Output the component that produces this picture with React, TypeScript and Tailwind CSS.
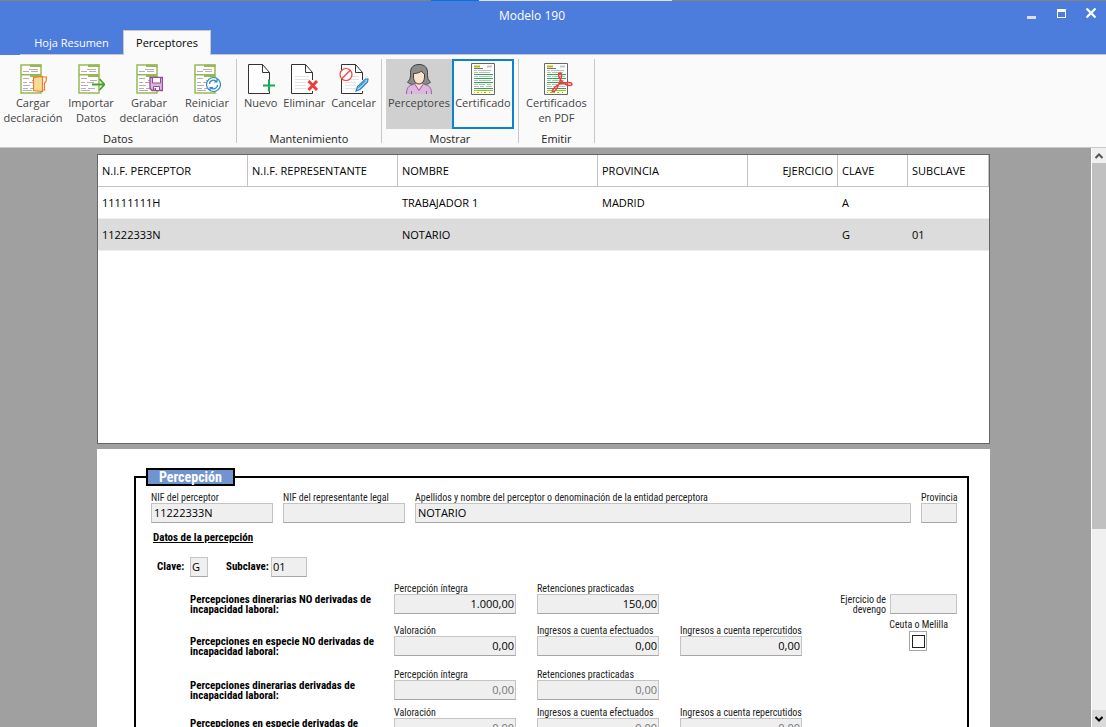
import type { ReactNode } from "react";
import { clsx } from "clsx";

const GREEN = "#97b954";

function FormSheet({ children }: { children: ReactNode }) {
  return (
    <svg width="28" height="32" viewBox="0 0 28 32" fill="none" aria-hidden="true">
      <path d="M2 2h20v28H2z" fill="#fff" stroke={GREEN} strokeWidth="1.5" />
      <path d="M11 1.5h11.5V4H11zM2 11h20v1.5H2zM11 11h11v3H11z" fill={GREEN} />
      <path
        d="M10 6.500h9M4 8.500h6M12 8.500h7M4 15.500h6M13 17.500h7M4 19.500h4M10 19.500h7M4 22.500h7M4 25.500h5M11 25.500h7M4 27.500h9"
        stroke="#b5aeb5"
      />
      {children}
    </svg>
  );
}

function LoadIcon() {
  return (
    <FormSheet>
      <path d="M23 14h4.500l-.5 4.500-1.500 1.500v7H23z" fill="#fff" stroke="#ee7a2c" strokeWidth="1.200" />
      <path d="M14.500 14.500l9-1v15l-9-1z" fill="#f8dc93" stroke="#ee7a2c" strokeWidth="1.200" />
    </FormSheet>
  );
}

function ImportIcon() {
  return (
    <FormSheet>
      <path d="M15 21.500h12M22.500 16l5 5.500-5 5.500" stroke="#45a22b" strokeWidth="1.800" />
    </FormSheet>
  );
}

function SaveIcon() {
  return (
    <FormSheet>
      <path d="M15 14.500h12.500v13H17l-2-2z" fill="#dcb6df" stroke="#934a9b" strokeWidth="1.300" />
      <path d="M17.500 14.500h8v5.500h-8z" fill="#fff" stroke="#934a9b" />
      <path d="M18.500 23.500h6v4h-6z" fill="#fff" stroke="#934a9b" />
      <path d="M19.500 25h1.500v2h-1.500z" fill="#934a9b" />
    </FormSheet>
  );
}

function ResetIcon() {
  return (
    <FormSheet>
      <circle cx="20.500" cy="21.500" r="7" fill="#fff" stroke="#2c88c7" strokeWidth="1.200" />
      <path
        d="M16.500 21a4 4 0 0 1 7-2.500M24.500 22a4 4 0 0 1-7 2.500M24 16v3h-3M17 27.500v-3h3"
        stroke="#2c88c7"
        strokeWidth="1.200"
      />
    </FormSheet>
  );
}

function BlankSheet({ children, lined = false }: { children: ReactNode; lined?: boolean }) {
  return (
    <svg width="30" height="32" viewBox="0 0 30 32" fill="none" aria-hidden="true">
      <path d="M3 1.500h13l7 8v21H3z" fill="#fff" />
      {lined && (
        <path d="M6 13.500h14M6 16.500h14M6 19.500h11M6 22.500h11M6 25.500h11" stroke="#e3e3e3" />
      )}
      <path d="M23.500 17V9.500l-7-8H2.500v29h21V28" stroke="#333" />
      <path d="M16.500 1.500v8h7" stroke="#333" />
      {children}
    </svg>
  );
}

function NewIcon() {
  return (
    <BlankSheet>
      <path d="M17 22.500h12M23 16.500v12" stroke="#17aa55" strokeWidth="2" />
    </BlankSheet>
  );
}

function DeleteIcon() {
  return (
    <BlankSheet lined>
      <path d="M19.500 18l8.500 9M28 18l-8.500 9" stroke="#ee3d3d" strokeWidth="3" />
    </BlankSheet>
  );
}

function CancelIcon() {
  return (
    <BlankSheet lined>
      <circle cx="7" cy="11.500" r="6" fill="#fff" stroke="#f04444" strokeWidth="1.200" />
      <path d="M3 15.500l8-8" stroke="#f04444" strokeWidth="1.200" />
      <path
        d="M17 28l1.500-4.500 8-7.500 2.500 0-.5 3-7.500 7.500z"
        fill="#a9d7ef"
        stroke="#2583bf"
        strokeWidth="1.200"
      />
      <path d="M19.500 24.500l7-6.500" stroke="#2583bf" />
    </BlankSheet>
  );
}

function PersonIcon() {
  return (
    <svg width="28" height="32" viewBox="0 0 28 32" fill="none" aria-hidden="true">
      <path
        d="M14 1.500c-5.500 0-8.500 3-8.500 8 0 5 0 7-3 9.500 2 2.500 6 3 8.500 1.500h6c2.500 1.500 6.500 1 8.500-1.500-3-2.500-3-4.500-3-9.500 0-5-3-8-8.500-8z"
        fill="#8c8c8c"
        stroke="#404040"
      />
      <path d="M1.500 31c0-5 1.500-7.500 4-8.500l5-2h7l5 2c2.500 1 4 3.500 4 8.500z" fill="#dcb8dd" />
      <path
        d="M1.500 31c0-5 1.500-7.500 4-8.500l5-2M26.500 31c0-5-1.500-7.500-4-8.500l-5-2M6.500 31v-3M21.500 31v-3M10 21.500l4 6 4-6"
        stroke="#9b5ba4"
      />
      <path d="M11 17.500v4l3 4.500 3-4.500v-4z" fill="#fbe0ca" />
      <path
        d="M8.500 10.500c3.500 0 6.500-1 8-2.500.5 1.500 2 2.500 3 3v3c0 4-2.500 7-5.500 7s-5.500-3-5.500-7z"
        fill="#fde3cb"
        stroke="#404040"
      />
    </svg>
  );
}

function CertificateLines() {
  return (
    <>
      <path d="M1.500 .5h23v31h-23z" fill="#fff" stroke="#666" />
      <path d="M4 2.500h6v2H4zM4 27h19v1H4z" fill="#b8bd00" />
      <path d="M17 2.500h5v2h-5z" fill="#c4c4c4" />
      <path d="M4 5.500h9" stroke="#777" />
      <path
        d="M4 7.500h3M8 7.500h13M4 9.500h4M9 9.500h11M4 13.500h4M9 13.500h13M4 17.500h4M9 17.500h12M4 21.500h4M9 21.500h6M17 21.500h4M4 23.500h5M10 23.500h4M16 23.500h6"
        stroke="#bcbcbc"
      />
      <path d="M4 11.500h19M4 15.500h19M4 19.500h19M4 25.500h19" stroke="#19b24b" />
      <path d="M4 29.500h1M7 29.500h2M11 29.500h1M14 29.500h2M19 29.500h1" stroke="#b8bd00" />
    </>
  );
}

function CertificateIcon() {
  return (
    <svg width="26" height="32" viewBox="0 0 26 32" fill="none" aria-hidden="true">
      <CertificateLines />
    </svg>
  );
}

function PdfIcon() {
  return (
    <svg
      width="26"
      height="32"
      viewBox="0 0 26 32"
      fill="none"
      className="overflow-visible"
      aria-hidden="true"
    >
      <CertificateLines />
      <path
        d="M17 10c-2.500 0-1.500 4.500 1 7.500 2.500 3 6 5 9 5s2.500-3-1-3c-4 0-9 1-12 3s-6 6-4 6.500 5-5.500 7-10.500 2-8.500 0-8.500z"
        stroke="#ee3b3b"
        strokeWidth="1.500"
      />
    </svg>
  );
}

type Action = { label: string[]; icon: ReactNode; state?: "pressed" | "focused" };

const GROUPS: { name: string; padding: string; button: string; actions: Action[] }[] = [
  {
    name: "Datos",
    padding: "pl-1",
    button: "w-[58px]",
    actions: [
      { label: ["Cargar", "declaración"], icon: <LoadIcon /> },
      { label: ["Importar", "Datos"], icon: <ImportIcon /> },
      { label: ["Grabar", "declaración"], icon: <SaveIcon /> },
      { label: ["Reiniciar", "datos"], icon: <ResetIcon /> },
    ],
  },
  {
    name: "Mantenimiento",
    padding: "pl-1 pr-0.5",
    button: "px-[3px]",
    actions: [
      { label: ["Nuevo"], icon: <NewIcon /> },
      { label: ["Eliminar"], icon: <DeleteIcon /> },
      { label: ["Cancelar"], icon: <CancelIcon /> },
    ],
  },
  {
    name: "Mostrar",
    padding: "px-1",
    button: "",
    actions: [
      { label: ["Perceptores"], icon: <PersonIcon />, state: "pressed" },
      { label: ["Certificado"], icon: <CertificateIcon />, state: "focused" },
    ],
  },
  {
    name: "Emitir",
    padding: "px-1",
    button: "w-[67px]",
    actions: [{ label: ["Certificados", "en PDF"], icon: <PdfIcon /> }],
  },
];

function TitleBar() {
  return (
    <header className="bg-[#4c7cdc] text-white">
      <div className="flex h-px bg-[#828282]">
        <span className="ml-[39%] w-12 bg-[#0078d7]" />
        <span className="w-[193px] bg-[#dedede]" />
      </div>
      <div className="grid h-[29px] grid-cols-[1fr_auto_1fr] items-center">
        <h1 className="col-start-2 pr-[42px] text-xs">Modelo 190</h1>
        <div className="flex justify-end gap-[18px] pr-[9px] pb-1">
          <button type="button" aria-label="Minimizar" className="size-3">
            <svg width="12" height="12" viewBox="0 0 12 12">
              <path d="M2 8h9v3H2z" fill="#ddd" />
            </svg>
          </button>
          <button type="button" aria-label="Maximizar" className="size-3">
            <svg width="12" height="12" viewBox="0 0 12 12">
              <path d="M2 1h9v9H2zM3 4v5h7V4z" fill="#fff" fillRule="evenodd" />
            </svg>
          </button>
          <button type="button" aria-label="Cerrar" className="size-3">
            <svg width="12" height="12" viewBox="0 0 12 12">
              <path d="M1.500 .5l9 9M10.500 .5l-9 9" stroke="#fff" strokeWidth="2.200" />
            </svg>
          </button>
        </div>
      </div>
      <nav className="flex h-[25px] pl-5 text-[11px]">
        <button type="button" className="w-[103px] border-b border-[#c8c8c8] pt-0.5">
          Hoja Resumen
        </button>
        <button
          type="button"
          className="w-[88px] border border-b-0 border-[#c8c8c8] bg-[#fafafa] text-black"
        >
          Perceptores
        </button>
        <span className="flex-1 border-b border-[#c8c8c8]" />
      </nav>
    </header>
  );
}

function Ribbon() {
  return (
    <div className="flex border-b border-[#c8c8c8] bg-[#fafafa] pt-1 pb-1 text-[11px]">
      {GROUPS.map((group) => (
        <section
          key={group.name}
          className="flex h-[84px] flex-col border-r border-[#c8c8c8]"
        >
          <div className={clsx("flex", group.padding)}>
            {group.actions.map((action) => (
              <button
                key={action.label.join(" ")}
                type="button"
                className={clsx(
                  "flex h-[70px] flex-col items-center text-[#444]",
                  group.button,
                  !action.state && "pt-1",
                  action.state === "pressed" && "w-[66px] bg-[#d0d0d0] pt-1",
                  action.state === "focused" && "w-[62px] border-2 border-[#0a84cc] pt-[2px]",
                )}
              >
                {action.icon}
                <span className="leading-[15px] whitespace-nowrap">
                  {action.label.map((line) => (
                    <span key={line} className="block">
                      {line}
                    </span>
                  ))}
                </span>
              </button>
            ))}
          </div>
          <h2 className="pt-0.5 text-center leading-[15px] text-[#222]">{group.name}</h2>
        </section>
      ))}
    </div>
  );
}

const COLUMNS = [
  { name: "N.I.F. PERCEPTOR", width: "w-[150px]" },
  { name: "N.I.F. REPRESENTANTE", width: "w-[150px]" },
  { name: "NOMBRE", width: "w-[200px]" },
  { name: "PROVINCIA", width: "w-[150px]" },
  { name: "EJERCICIO", width: "w-[90px]" },
  { name: "CLAVE", width: "w-[70px]" },
  { name: "SUBCLAVE", width: "w-[81px]" },
];

const ROWS = [
  ["11111111H", "", "TRABAJADOR 1", "MADRID", "", "A", ""],
  ["11222333N", "", "NOTARIO", "", "", "G", "01"],
];

function PayeeTable() {
  return (
    <div className="h-[290px] border border-[#666] bg-white text-[11px]">
      <table className="w-full table-fixed border-separate border-spacing-0">
        <thead>
          <tr className="h-8">
            {COLUMNS.map((column) => (
              <th
                key={column.name}
                className={clsx(
                  "border-r border-b border-[#c3c3c3] px-1 pt-0.5 font-normal whitespace-nowrap",
                  column.width,
                  column.name === "EJERCICIO" ? "text-right" : "text-left",
                )}
              >
                {column.name}
              </th>
            ))}
          </tr>
        </thead>
        <tbody>
          {ROWS.map((row, i) => (
            <tr key={row[0]} className={clsx("h-8", i === 1 && "bg-[#dcdcdc]")}>
              {row.map((cell, j) => (
                <td key={COLUMNS[j].name} className="border-b border-[#eee] px-1 pt-0.5">
                  {cell}
                </td>
              ))}
            </tr>
          ))}
        </tbody>
      </table>
    </div>
  );
}

const INPUT =
  "h-5 border border-[#c4c4c4] border-b-[#a6a6a6] bg-[#efefef] pb-0.5 font-['Open_Sans','Noto_Sans',sans-serif] text-[11px]";

type FieldProps = {
  id: string;
  label: string;
  value?: string;
  className?: string;
  numeric?: boolean;
  muted?: boolean;
};

function Field({ id, label, value = "", className, numeric, muted }: FieldProps) {
  return (
    <div className={clsx("flex flex-col", className)}>
      <label htmlFor={id} className="h-3 leading-[14px] whitespace-nowrap">
        {label}
      </label>
      <input
        id={id}
        readOnly
        defaultValue={value}
        className={clsx(
          INPUT,
          "w-full",
          numeric ? "pr-px text-right" : "pl-0.5",
          muted ? "text-[#777]" : "text-black",
        )}
      />
    </div>
  );
}

const INCOME = [
  {
    id: "dinerarias",
    title: "Percepciones dinerarias NO derivadas de",
    fields: [
      ["Percepción íntegra", "1.000,00"],
      ["Retenciones practicadas", "150,00"],
    ],
    height: "h-[42px]",
  },
  {
    id: "especie",
    title: "Percepciones en especie NO derivadas de",
    fields: [
      ["Valoración", "0,00"],
      ["Ingresos a cuenta efectuados", "0,00"],
      ["Ingresos a cuenta repercutidos", "0,00"],
    ],
    height: "h-11",
  },
  {
    id: "dinerarias-il",
    title: "Percepciones dinerarias derivadas de",
    fields: [
      ["Percepción íntegra", "0,00"],
      ["Retenciones practicadas", "0,00"],
    ],
    height: "h-[38px]",
    muted: true,
  },
  {
    id: "especie-il",
    title: "Percepciones en especie derivadas de",
    fields: [
      ["Valoración", "0,00"],
      ["Ingresos a cuenta efectuados", "0,00"],
      ["Ingresos a cuenta repercutidos", "0,00"],
    ],
    height: "h-[42px]",
    muted: true,
  },
];

function PayeeForm() {
  return (
    <form className="mt-[5px] bg-white pt-[19px] pr-[21px] pb-6 pl-[37px] font-['Roboto_Condensed','Liberation_Sans_Narrow','Roboto',sans-serif] text-[10px] text-[#222]">
      <fieldset className="min-w-0 border-2 border-black pb-6">
        <legend className="ml-[10px] h-[18px] border-2 border-black bg-[#7094d0] px-[11px] text-[14px] leading-[14px] font-bold text-white">
          Percepción
        </legend>
        <div className="flex gap-[10px] pt-[5px] pr-[10px] pl-[15px]">
          <Field id="nif" label="NIF del perceptor" value="11222333N" className="w-[122px]" />
          <Field id="nif-rep" label="NIF del representante legal" className="w-[122px]" />
          <Field
            id="nombre"
            label="Apellidos y nombre del perceptor o denominación de la entidad perceptora"
            value="NOTARIO"
            className="flex-1"
          />
          <Field id="provincia" label="Provincia" className="w-[36px]" />
        </div>

        <h3 className="mt-2 pl-[17px] text-[11px] leading-[14px] font-bold text-black underline">
          Datos de la percepción
        </h3>

        <div className="mt-3 flex items-center pl-[21px] text-[11px] font-bold text-black">
          <label htmlFor="clave" className="w-[33px]">
            Clave:
          </label>
          <input
            id="clave"
            readOnly
            defaultValue="G"
            className={clsx(INPUT, "w-[18px] pl-px font-normal")}
          />
          <label htmlFor="subclave" className="ml-[18px] w-[45px]">
            Subclave:
          </label>
          <input
            id="subclave"
            readOnly
            defaultValue="01"
            className={clsx(INPUT, "w-[36px] pl-px font-normal")}
          />
        </div>

        <div className="mt-[5px] flex justify-between pr-[10px] pl-[54px]">
          <div>
            {INCOME.map((row) => (
              <div key={row.id} className={clsx("flex", row.height)}>
                <h4 className="w-[204px] pt-[13px] text-[11px] leading-[10px] font-bold text-black">
                  {row.title}
                  <br />
                  incapacidad laboral:
                </h4>
                <div className="flex gap-[21px]">
                  {row.fields.map(([label, value]) => (
                    <Field
                      key={label}
                      id={`${row.id}-${label.replaceAll(" ", "-")}`}
                      label={label}
                      value={value}
                      className="w-[122px]"
                      numeric
                      muted={row.muted}
                    />
                  ))}
                </div>
              </div>
            ))}
          </div>
          <div className="pt-3">
            <div className="flex justify-end gap-1">
              <label htmlFor="ejercicio" className="pt-px text-right leading-[10px]">
                Ejercicio de
                <br />
                devengo
              </label>
              <input id="ejercicio" readOnly className={clsx(INPUT, "w-[67px]")} />
            </div>
            <div className="mt-1 flex flex-col items-end pr-[9px]">
              <label htmlFor="ceuta" className="leading-3">
                Ceuta o Melilla
              </label>
              <span className="mr-[21px] flex h-5 w-[18px] items-center justify-center border border-[#a6a6a6] bg-white">
                <input
                  id="ceuta"
                  type="checkbox"
                  className="size-[13px] appearance-none border border-[#222] bg-white"
                />
              </span>
            </div>
          </div>
        </div>
      </fieldset>
    </form>
  );
}

function ScrollBar() {
  return (
    <div className="flex w-[15px] shrink-0 flex-col border-l border-white bg-[#f0f0f0]">
      <button type="button" aria-label="Subir" className="flex h-[15px] items-center justify-center">
        <svg width="8" height="6" viewBox="0 0 8 6" fill="none">
          <path d="M.5 5L4 1.500 7.500 5" stroke="#555" strokeWidth="2" />
        </svg>
      </button>
      <div className="flex-1">
        <div className="h-[67%] bg-[#c0c0c0]" />
      </div>
      <button
        type="button"
        aria-label="Bajar"
        className="flex h-[17px] items-center justify-center bg-[#dadada]"
      >
        <svg width="8" height="6" viewBox="0 0 8 6" fill="none">
          <path d="M.5 1L4 4.500 7.500 1" stroke="#000" strokeWidth="2" />
        </svg>
      </button>
    </div>
  );
}

export default function App() {
  return (
    <div className="flex h-screen flex-col overflow-hidden bg-[#a0a0a0] font-['Open_Sans','Noto_Sans',sans-serif] text-black">
      <TitleBar />
      <Ribbon />
      <div className="flex min-h-0 flex-1">
        <main className="min-w-0 flex-1 overflow-hidden pt-1.5 pr-1">
          <div className="mx-auto max-w-[893px]">
            <PayeeTable />
            <PayeeForm />
          </div>
        </main>
        <ScrollBar />
      </div>
    </div>
  );
}
